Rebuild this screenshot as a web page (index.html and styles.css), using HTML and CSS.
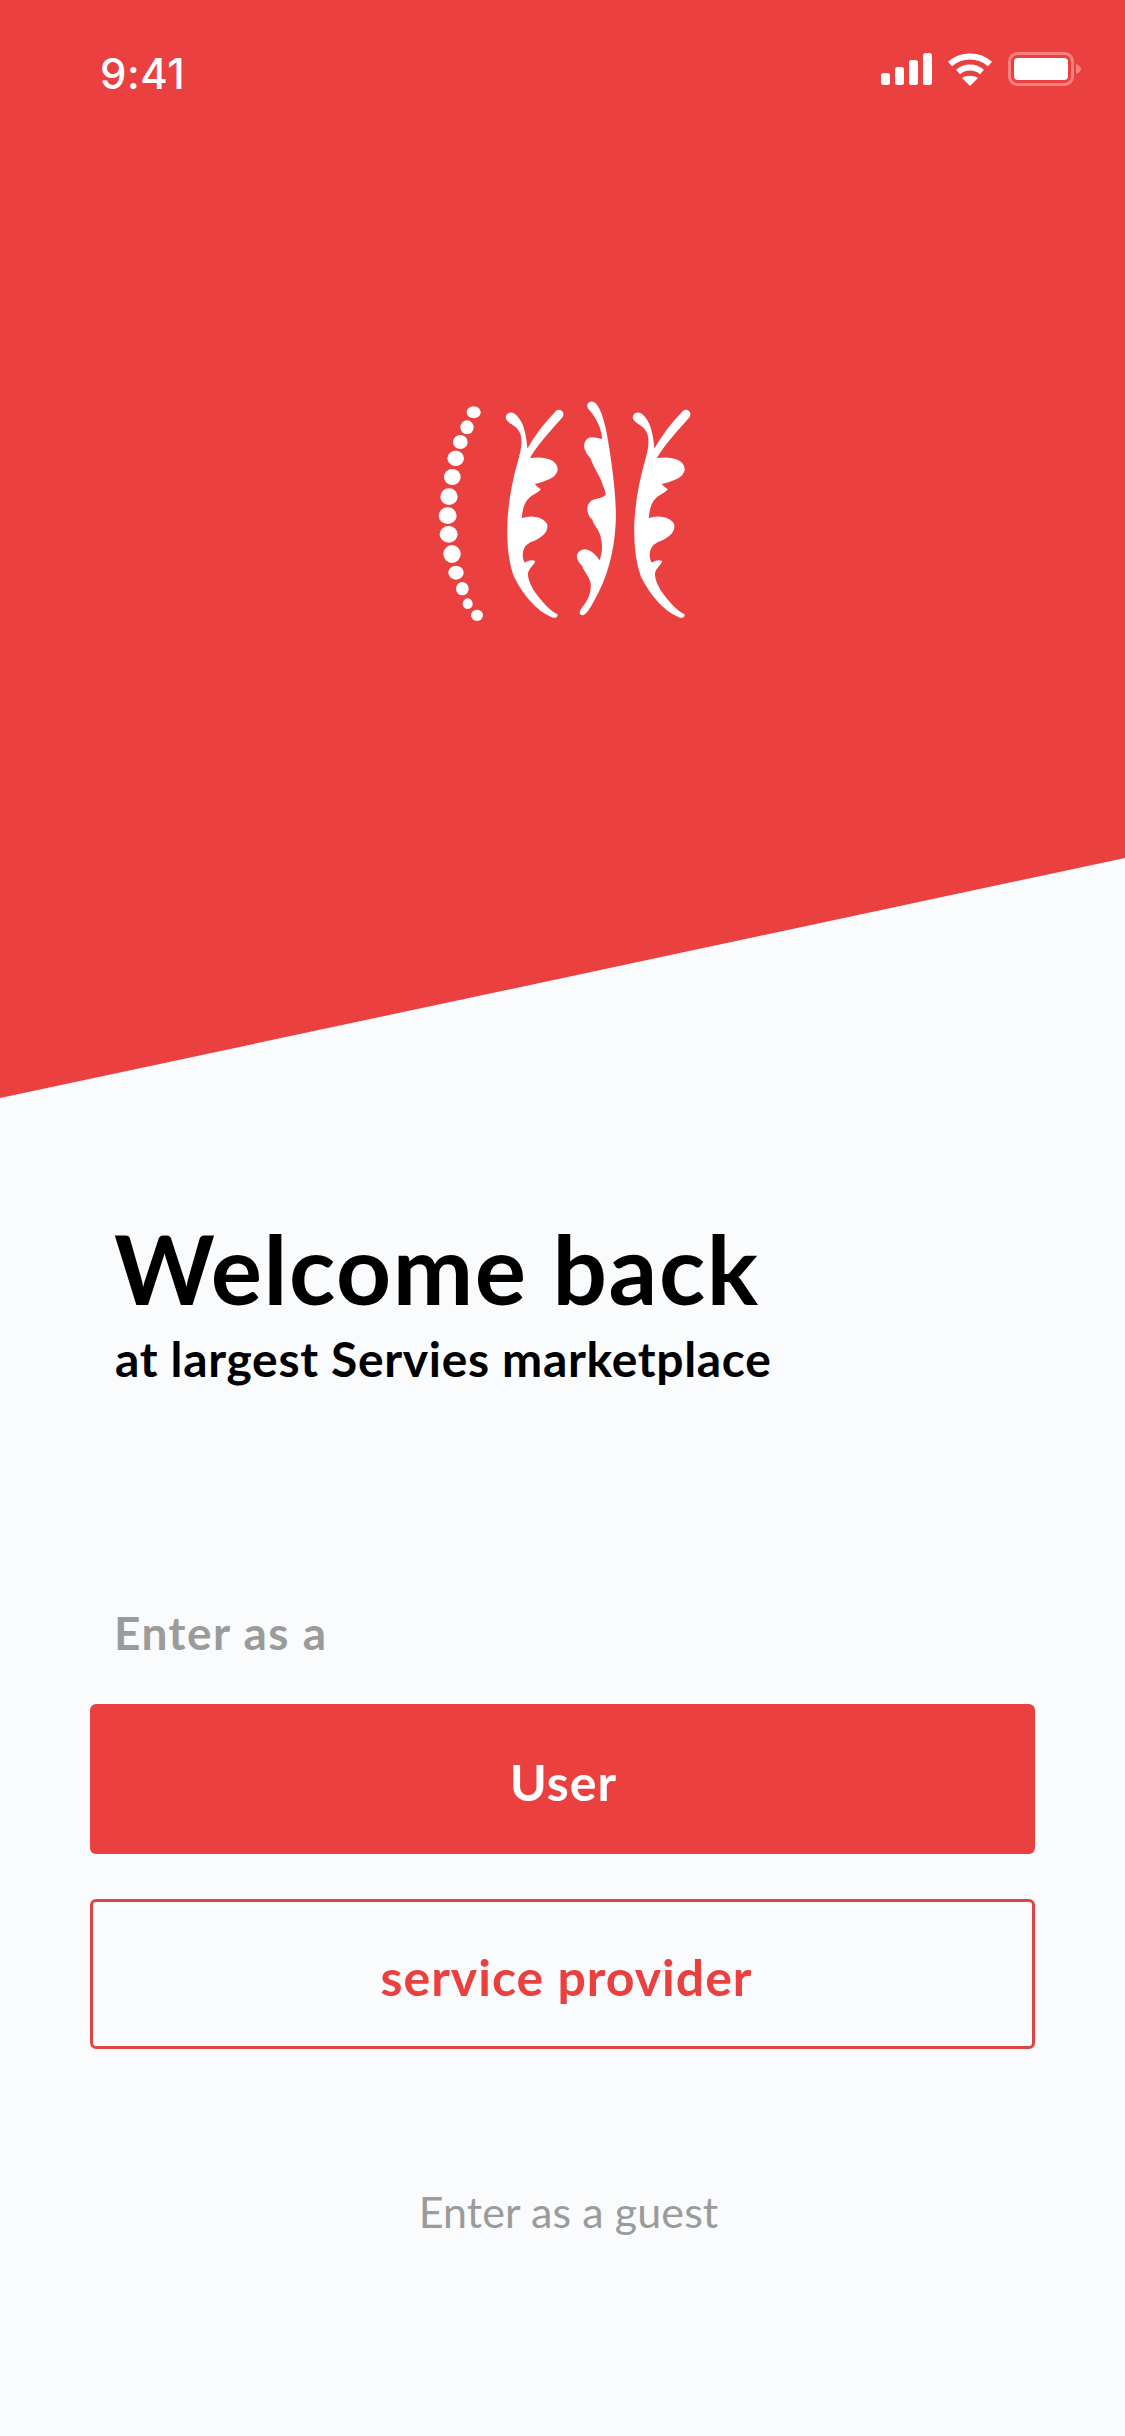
FILE: index.html
```html
<!DOCTYPE html>
<html>
<head>
<meta charset="UTF-8">
<title>Welcome back</title>
<link rel="stylesheet" href="styles.css">
</head>
<body>
<div class="screen">
	<!-- red slanted header -->
	<div class="hero">
		<div class="status">
			<span class="time">9:41</span>
			<div class="status-icons">
				<svg width="51" height="32" viewBox="0 0 51 32" fill="#fff">
					<rect x="0" y="20" width="9" height="12" rx="2.5"/>
					<rect x="14" y="14" width="9" height="18" rx="2.5"/>
					<rect x="28" y="7" width="9" height="25" rx="2.5"/>
					<rect x="42" y="0" width="9" height="32" rx="2.5"/>
				</svg>
				<svg width="46" height="33" viewBox="0 0 46 33" fill="none" stroke="#fff" stroke-width="6">
					<path d="M3 11C14 1 32 1 43 11"/>
					<path d="M11 19C18 13 28 13 35 19"/>
					<path d="M23 33L15 25C19 22 27 22 31 25Z" fill="#fff" stroke="none"/>
				</svg>
				<svg width="73" height="34" viewBox="0 0 73 34">
					<rect x="1.5" y="1.5" width="63" height="31" rx="8" fill="none" stroke="#ff8080" stroke-width="3"/>
					<rect x="6" y="6" width="54" height="22" rx="4" fill="#fff"/>
					<path d="M68 12C71 13 73 15 73 17C73 19 71 21 68 22Z" fill="#ff8080"/>
				</svg>
			</div>
		</div>
		<div class="logo">
			<svg width="300" height="260" viewBox="0 0 900 780" fill="#fff">
				<!-- dots -->
				<ellipse cx="191" cy="97" rx="21" ry="18"/>
				<ellipse cx="171" cy="142" rx="20" ry="21"/>
				<ellipse cx="151" cy="186" rx="22" ry="21"/>
				<ellipse cx="137" cy="235" rx="25" ry="23"/>
				<ellipse cx="127" cy="291" rx="25" ry="24"/>
				<ellipse cx="117" cy="350" rx="26" ry="25"/>
				<ellipse cx="113" cy="407" rx="27" ry="25"/>
				<ellipse cx="116" cy="463" rx="27" ry="25"/>
				<ellipse cx="126" cy="522" rx="26" ry="27"/>
				<ellipse cx="138" cy="578" rx="23" ry="21"/>
				<ellipse cx="157" cy="626" rx="19" ry="20"/>
				<ellipse cx="173" cy="671" rx="15" ry="16"/>
				<ellipse cx="201" cy="706" rx="18" ry="17"/>
				<!-- leaves -->
				<g stroke="#fff" stroke-width="6">
					<path id="leaf" d="M290 113C292 100 305 97 315 106C335 125 345 150 350 215C375 170 410 125 440 95C450 88 462 97 455 110C430 140 380 190 358 232C358 238 362 238 372 236C400 233 440 240 440 268C438 290 410 300 370 310C372 318 380 322 388 328C380 340 355 340 342 370C335 385 333 400 332 418C350 412 395 405 409 435C412 460 385 475 360 484C345 492 335 505 335 525C335 535 338 545 342 552C350 548 362 540 372 545C370 552 355 562 352 575C348 590 355 610 370 635C390 665 420 695 440 705C440 712 432 711 425 708C380 690 340 640 315 590C300 550 293 490 295 430C298 370 308 310 325 250C338 205 345 170 325 145C310 130 292 125 290 113Z"/>
					<use href="#leaf" x="381"/>
					<path d="M535 80C533 68 548 62 558 75C580 105 590 170 600 240C610 310 617 370 614 430C610 510 590 590 550 660C540 680 528 700 518 703C510 703 510 695 518 685C535 665 548 640 545 610C542 590 525 575 518 555C508 545 498 530 508 518C525 500 555 520 568 548C578 530 582 500 575 470C570 445 550 430 550 418C535 405 528 380 545 365C555 358 580 360 590 345C592 335 582 320 575 297C565 275 550 255 545 235C530 220 515 195 535 178C548 170 565 178 580 182C578 150 565 120 550 100C545 92 538 88 535 80Z"/>
				</g>
			</svg>
		</div>
	</div>

	<div class="content">
		<h1>Welcome back</h1>
		<p class="sub">at largest Servies marketplace</p>
		<p class="enter">Enter as a</p>
		<a class="btn btn-fill">User</a>
		<a class="btn btn-line">service provider</a>
		<a class="guest">Enter as a guest</a>
	</div>
</div>
</body>
</html>
```

FILE: styles.css
```css
*{box-sizing:border-box}
html,body{margin:0;padding:0}
body{background:#fafbfd;font-family:"Lato",sans-serif}
.screen{width:1125px;height:2436px;overflow:hidden;background:#fafbfd}
.hero{height:1098px;padding:41px 44px 0 100px;background:#eb4040;clip-path:polygon(0 0,100% 0,100% 858px,0 100%)}
.status{display:flex;justify-content:space-between;align-items:center;height:56px}
.time{padding-top:9px;font-family:"Inter",sans-serif;font-size:42px;font-weight:500;color:#fff;letter-spacing:0.5px}
.status-icons{display:flex;align-items:center;gap:15px}
.logo{margin:283px 0 0 310px;line-height:0}
.content{padding:115px 90px 0;display:flex;flex-direction:column}
h1{margin:0;padding-left:24px;font-size:96px;line-height:110px;font-weight:700;color:#000;letter-spacing:1.6px}
.sub{margin:8px 0 0;padding-left:25px;font-size:48px;line-height:56px;font-weight:700;color:#000;letter-spacing:0.67px}
.enter{margin:220px 0 0;padding-left:24px;font-size:46px;line-height:52px;font-weight:700;color:#9b9b9b;letter-spacing:1.5px}
.btn{display:flex;align-items:center;justify-content:center;height:150px;border-radius:6px;padding:5px 0 0 2px;font-size:50px;font-weight:700;letter-spacing:1px}
.btn-fill{margin-top:45px;background:#eb4040;color:#fff}
.btn-line{margin-top:45px;padding-left:8px;border:3px solid #e04545;color:#eb4040}
.guest{margin-top:138px;padding-left:12px;text-align:center;font-size:43px;line-height:50px;color:#9b9b9b;letter-spacing:0.1px}
```
